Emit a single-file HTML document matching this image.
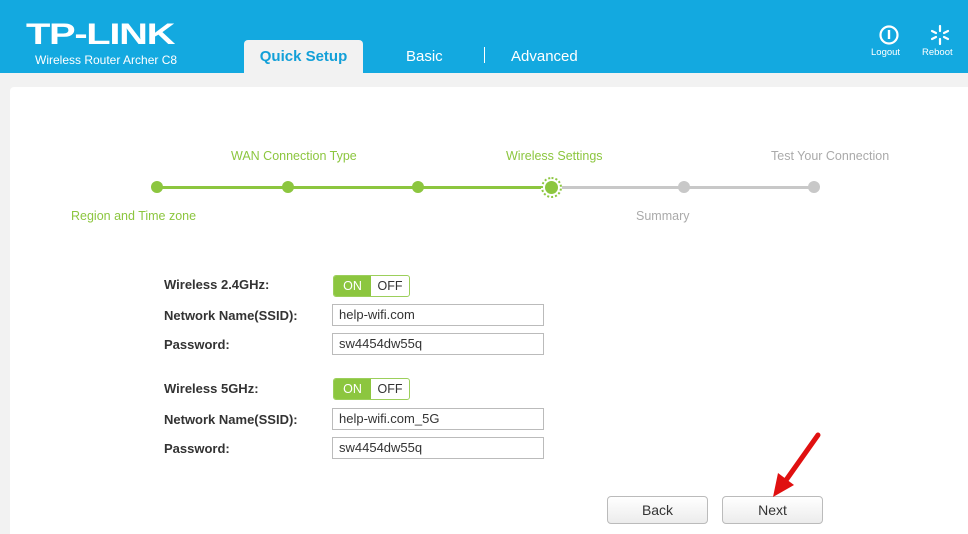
<!DOCTYPE html>
<html><head><meta charset="utf-8"><style>
*{margin:0;padding:0;box-sizing:border-box}
body{width:968px;height:534px;overflow:hidden;background:#f2f2f2;font-family:"Liberation Sans",sans-serif;position:relative}
.hdr{position:absolute;left:0;top:0;width:968px;height:73px;background:#13a9e0}
.abs{position:absolute}
.logo{left:26px;top:20px;color:#fff;font-weight:bold;font-size:30px;line-height:30px;letter-spacing:-1px;transform:scaleX(1.33);transform-origin:left}
.sub{left:35px;top:53px;color:#fff;font-size:12px}
.tab{left:244px;top:40px;width:119px;height:34px;background:#f2f2f2;border-radius:4px 4px 0 0;color:#13a0d8;font-size:15px;font-weight:bold;text-align:center;line-height:34px}
.nav{color:#fff;font-size:15px;top:48px}
.panel{left:10px;top:87px;width:958px;height:447px;background:#fff;border-radius:4px 0 0 0}
.lbl{font-size:12.5px;color:#8cc63f}
.gray{color:#aaa}
.dot{width:12px;height:12px;border-radius:50%;background:#8cc63f;top:181px}
.g{background:#c8c8c8}
.f{font-size:13px;font-weight:bold;color:#333;left:164px}
.inp{left:332px;width:212px;height:22px;border:1px solid #bbb;font-size:13px;color:#333;padding-left:6px;line-height:20px}
.tg{left:333px;width:77px;height:22px;border:1px solid #9ccf5b;border-radius:3px;overflow:hidden;font-size:12.5px}
.tg .on{position:absolute;left:0;top:0;width:37px;height:20px;background:#8cc63f;color:#fff;text-align:center;line-height:20px}
.tg .off{position:absolute;left:37px;top:0;width:38px;height:20px;color:#333;text-align:center;line-height:20px}
.btn{top:496px;width:101px;height:28px;border:1px solid #bbb;border-radius:4px;background:linear-gradient(#fff,#ececec);text-align:center;line-height:26px;font-size:14px;color:#333}
</style></head><body>
<div class="hdr"></div>
<div class="abs logo">TP-LINK</div>
<div class="abs sub">Wireless Router Archer C8</div>
<div class="abs tab">Quick Setup</div>
<div class="abs nav" style="left:406px">Basic</div>
<div class="abs" style="left:484px;top:47px;width:1px;height:16px;background:#fff"></div>
<div class="abs nav" style="left:511px">Advanced</div>
<svg class="abs" style="left:878px;top:24px" width="22" height="22"><circle cx="11" cy="11" r="8.5" fill="none" stroke="#fff" stroke-width="2.2"/><line x1="11" y1="6" x2="11" y2="15" stroke="#fff" stroke-width="2.4"/></svg>
<div class="abs" style="left:871px;top:47px;color:#fff;font-size:9.5px">Logout</div>
<svg class="abs" style="left:929px;top:24px" width="22" height="22" stroke="#fff" stroke-width="2.2" stroke-linecap="round"><line x1="11" y1="2" x2="11" y2="7"/><line x1="11" y1="15" x2="11" y2="20"/><line x1="3" y1="7" x2="7" y2="9"/><line x1="15" y1="13" x2="19" y2="15"/><line x1="3" y1="15" x2="7" y2="13"/><line x1="15" y1="9" x2="19" y2="7"/></svg>
<div class="abs" style="left:922px;top:47px;color:#fff;font-size:9.5px">Reboot</div>
<div class="abs panel"></div>

<div class="abs lbl" style="left:231px;top:149px">WAN Connection Type</div>
<div class="abs lbl" style="left:506px;top:149px">Wireless Settings</div>
<div class="abs lbl gray" style="left:771px;top:149px">Test Your Connection</div>
<div class="abs lbl" style="left:71px;top:209px">Region and Time zone</div>
<div class="abs lbl gray" style="left:636px;top:209px">Summary</div>
<div class="abs" style="left:157px;top:186px;width:395px;height:3px;background:#8cc63f"></div>
<div class="abs" style="left:552px;top:186px;width:262px;height:3px;background:#c8c8c8"></div>
<div class="abs dot" style="left:151px"></div>
<div class="abs dot" style="left:282px"></div>
<div class="abs dot" style="left:412px"></div>
<div class="abs" style="left:541px;top:177px;width:21px;height:21px;border-radius:50%;border:2px dotted #8cc63f;background:#fff"></div>
<div class="abs" style="left:545px;top:181px;width:13px;height:13px;border-radius:50%;background:#8cc63f"></div>
<div class="abs dot g" style="left:678px"></div>
<div class="abs dot g" style="left:808px"></div>

<div class="abs f" style="top:277px">Wireless 2.4GHz:</div>
<div class="abs tg" style="top:275px"><div class="on">ON</div><div class="off">OFF</div></div>
<div class="abs f" style="top:308px">Network Name(SSID):</div>
<div class="abs inp" style="top:304px">help-wifi.com</div>
<div class="abs f" style="top:337px">Password:</div>
<div class="abs inp" style="top:333px">sw4454dw55q</div>

<div class="abs f" style="top:381px">Wireless 5GHz:</div>
<div class="abs tg" style="top:378px"><div class="on">ON</div><div class="off">OFF</div></div>
<div class="abs f" style="top:412px">Network Name(SSID):</div>
<div class="abs inp" style="top:408px">help-wifi.com_5G</div>
<div class="abs f" style="top:441px">Password:</div>
<div class="abs inp" style="top:437px">sw4454dw55q</div>

<div class="abs btn" style="left:607px">Back</div>
<div class="abs btn" style="left:722px">Next</div>
<svg class="abs" style="left:760px;top:425px" width="70" height="80"><path d="M58 10 L24 58" stroke="#e01010" stroke-width="5" stroke-linecap="round"/><path d="M13 72 L18 48 L34 60 Z" fill="#e01010"/></svg>
</body></html>
